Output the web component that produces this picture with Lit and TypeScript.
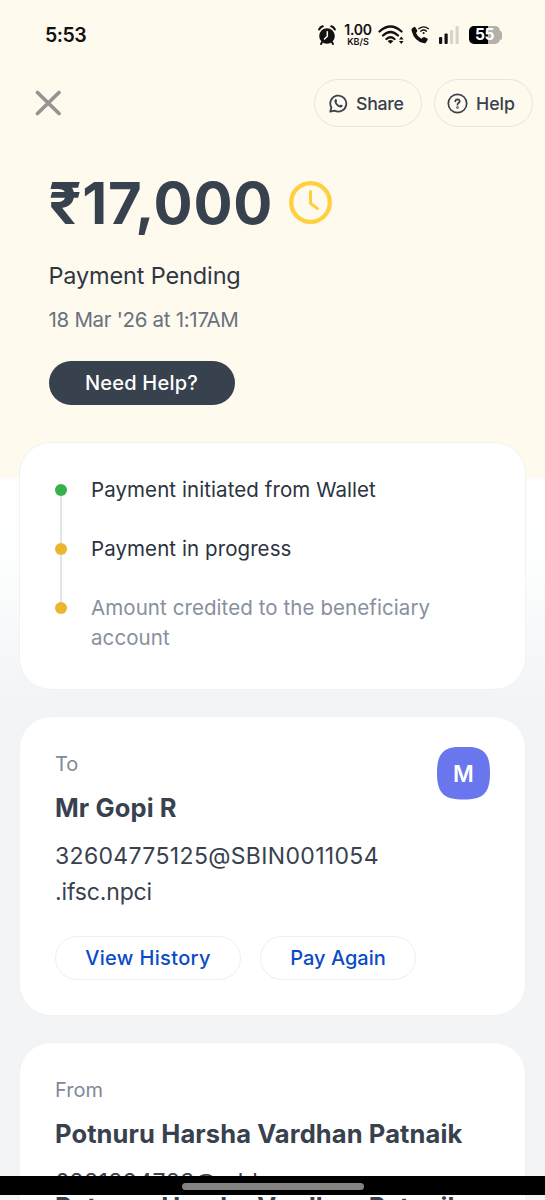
import { LitElement, html, css } from "lit";
import { customElement } from "lit/decorators.js";

interface Step {
  label: string;
  tone: "done" | "wait";
  muted?: boolean;
}

const STEPS: Step[] = [
  { label: "Payment initiated from Wallet", tone: "done" },
  { label: "Payment in progress", tone: "wait" },
  { label: "Amount credited to the beneficiary account", tone: "wait", muted: true },
];

@customElement("status-bar")
export class StatusBar extends LitElement {
  static styles = css`
    :host { display: flex; justify-content: space-between; height: 70px; padding: 0 43px 0 45px; align-items: center; color: #111; box-sizing: border-box; }
    .time { font-size: 19.5px; font-weight: 600; letter-spacing: -0.5px; line-height: 24px; }
    .icons { display: flex; align-items: center; height: 24px; margin-left: -2px; }
    .rate { display: flex; flex-direction: column; align-items: center; width: 28px; margin-left: 6px; font-weight: 600; }
    .num { font-size: 14px; line-height: 12px; letter-spacing: -0.3px; }
    .unit { font-size: 9px; line-height: 11px; }
    .wifi { margin-left: 6px; }
    .call { margin-left: 7px; }
    .signal { margin-left: 10px; }
    .battery { margin-left: 10px; display: flex; align-items: center; }
    .cell { width: 31px; height: 18px; border-radius: 5px; background: linear-gradient(90deg, #000 0 19px, #b4b1aa 19px); color: #fff; font-size: 15.5px; font-weight: 700; line-height: 18px; text-align: center; letter-spacing: -0.5px; }
    .cap { width: 2px; height: 9px; border-radius: 0 3px 3px 0; background: #b4b1aa; }
    svg { display: block; }
  `;
  render() {
    return html`
      <span class="time">5:53</span>
      <div class="icons">
        <svg width="20" height="22" viewBox="0 0 20 22">
          <circle cx="9" cy="12" r="7.800" fill="#111"/>
          <path d="M1.200 5.400Q2.300 3 4.700 2.300M16.800 5.400Q15.700 3 13.300 2.300" fill="none" stroke="#111" stroke-width="2.200" stroke-linecap="round"/>
          <path d="M4 18.300 3 20M14 18.300l1 1.700" stroke="#111" stroke-width="2" stroke-linecap="round"/>
          <path d="M9.300 7.800v4.400l-2.800 2.800" fill="none" stroke="#fffaee" stroke-width="1.500" stroke-linecap="round"/>
        </svg>
        <div class="rate"><span class="num">1.00</span><span class="unit">KB/S</span></div>
        <svg class="wifi" width="26" height="22" viewBox="0 0 26 22" fill="none" stroke="#111" stroke-width="2.300" stroke-linecap="round">
          <path d="M1.500 7.500Q12.500-2.500 23.500 7.500M5 11.500Q12.500 4.500 20 11.500M8.500 15Q12.500 11.500 16.500 15"/>
          <path d="M12.500 19.800 9.600 17q2.900-1.800 5.800 0z" fill="#111" stroke="none"/>
          <path d="M23.300 12.500l2.300 3h-4.600zM23.300 20l2.300-3h-4.600z" fill="#111" stroke="none"/>
        </svg>
        <svg class="call" width="18" height="20" viewBox="0 0 18 20">
          <path d="M1 3.600 3 1.900q.8-.5 1.300.3L6.200 5.200q.4.800-.2 1.500L5 7.900q1.700 4 5.400 5.800l1.800-1.400q.7-.5 1.500-.1l2.600 1.400q.8.500.3 1.300l-1.600 2.600q-.6.900-1.800.7Q3.500 17 .5 5.500.200 4.300 1 3.600z" fill="#111"/>
          <path d="M7.800 3.700q4.800-3.800 9.600 0M9.700 6.200q2.900-2.400 5.800 0" fill="none" stroke="#111" stroke-width="1.300" stroke-linecap="round"/>
          <circle cx="12.600" cy="8" r="1" fill="#111"/>
        </svg>
        <svg class="signal" width="20" height="20" viewBox="0 0 20 20">
          <rect x="0" y="12" width="3.200" height="7" rx="1" fill="#111"/>
          <rect x="5.500" y="8.500" width="3.200" height="10.500" rx="1" fill="#111"/>
          <rect x="11" y="5" width="3.200" height="14" rx="1" fill="#d8d4ca"/>
          <rect x="16.500" y="1" width="3.200" height="18" rx="1" fill="#d8d4ca"/>
        </svg>
        <div class="battery"><div class="cell">55</div><div class="cap"></div></div>
      </div>`;
  }
}

@customElement("top-actions")
export class TopActions extends LitElement {
  static styles = css`
    :host { display: flex; align-items: center; justify-content: space-between; padding: 9px 12px 0 35px; }
    .group { display: flex; gap: 12px; }
    .pill { display: flex; align-items: center; box-sizing: border-box; height: 48px; border: 1.500px solid #e9e5dc; border-radius: 24px; font: inherit; color: #38404d; background: none; font-size: 17.700px; font-weight: 500; margin: 0; }
    .share { width: 108px; padding: 0 0 0 14px; gap: 8px; letter-spacing: -0.250px; }
    .help { width: 99px; padding: 0 0 0 12px; gap: 8px; }
    svg { display: block; flex: none; }
  `;
  render() {
    return html`
      <svg width="26" height="26" viewBox="0 0 26 26"><path d="M2.500 2.500 24 23.500M24 2.500 2.500 23.500" stroke="#949494" stroke-width="3.700" stroke-linecap="round"/></svg>
      <div class="group">
        <button class="pill share">
          <svg width="19" height="19" viewBox="0 0 19 19" fill="none" stroke="#38404d" stroke-width="1.800" stroke-linejoin="round">
            <path d="M1.300 17.700 2.400 13.600A8 8 0 1 1 5.500 16.600z"/>
            <path d="M6.200 5.200 7.300 5.100 8.200 7.200 7.400 8.300Q8.500 10.500 10.700 11.400L11.700 10.500 13.700 11.500Q13.600 13.500 11.700 13.600 7 12.700 5.500 8 5.100 6 6.200 5.200z" fill="#38404d" stroke="none"/>
          </svg>
          <span>Share</span>
        </button>
        <button class="pill help">
          <svg width="21" height="21" viewBox="0 0 21 21" fill="none" stroke="#38404d" stroke-width="1.700" stroke-linecap="round">
            <circle cx="10.500" cy="10.500" r="9.200"/>
            <path d="M8.300 8.300Q8.500 6.300 10.500 6.300 12.700 6.400 12.700 8.300 12.600 9.400 11.400 10.100 10.500 10.600 10.500 11.700"/>
            <circle cx="10.500" cy="14.500" r=".4"/>
          </svg>
          <span>Help</span>
        </button>
      </div>`;
  }
}

@customElement("progress-steps")
export class ProgressSteps extends LitElement {
  static styles = css`
    :host { display: block; }
    .step { display: flex; gap: 24px; padding-bottom: 29px; }
    .step:last-child { padding-bottom: 0; }
    .rail { display: flex; flex-direction: column; align-items: center; width: 12px; margin-top: 9px; margin-bottom: -38px; }
    .step:last-child .rail { margin-bottom: 0; }
    .dot { width: 12px; height: 12px; border-radius: 50%; flex: none; }
    .done { background: #35b04a; }
    .wait { background: #ebb52f; }
    .line { width: 1.500px; flex: 1; background: #e3e4e9; }
    .label { flex: 1; font-size: 20.500px; line-height: 30px; color: #2b333f; letter-spacing: 0.080px; max-width: 370px; }
    .muted { color: #87909e; }
  `;
  render() {
    return STEPS.map((s, i) => html`
      <div class="step">
        <div class="rail"><div class="dot ${s.tone}"></div>${i < STEPS.length - 1 ? html`<div class="line"></div>` : null}</div>
        <div class="label ${s.muted ? "muted" : ""}">${s.label}</div>
      </div>`);
  }
}

@customElement("app-root")
export class AppRoot extends LitElement {
  static styles = css`
    :host { display: flex; flex-direction: column; height: 1200px; overflow: hidden; font-family: Inter, "Open Sans", sans-serif; color: #38414e; }
    .screen { height: 1176px; flex: none; overflow: hidden; background: linear-gradient(180deg, #fffaee 0 478px, #fefefe 478px, #fdfefe 560px, #f2f4f6 700px); }
    .hero { padding: 45px 49px 0 48.500px; }
    .amount { display: flex; align-items: center; gap: 15.500px; height: 62px; font-size: 58px; font-weight: 700; letter-spacing: 0.700px; line-height: 62px; }
    .amount svg { display: block; margin-top: -1px; }
    .state { margin-top: 27px; font-size: 23.500px; line-height: 30px; color: #2f3742; letter-spacing: -0.150px; }
    .date { margin-top: 15px; font-size: 20.500px; line-height: 28px; color: #68717e; letter-spacing: -0.300px; }
    .need { display: block; box-sizing: border-box; margin: 27px 0 0 0; border: 0; width: 186px; height: 44px; border-radius: 22px; background: #38414e; color: #fff; font: inherit; font-size: 20px; font-weight: 500; letter-spacing: 0.200px; padding: 0; }
    .cards { display: flex; flex-direction: column; gap: 26px; padding: 36.500px 19px 0; }
    .card { box-sizing: border-box; background: #fff; border: 1px solid #f0f2f4; border-radius: 32px; padding: 30.500px 35px 31px 35px; flex: none; }
    .steps { height: 248.500px; padding-top: 32px; }
    .to { height: 300px; display: flex; flex-direction: column; }
    .from { height: 300px; }
    .head { display: flex; justify-content: space-between; height: 43px; }
    .role { font-size: 20px; line-height: 32px; color: #808998; }
    .avatar { width: 53px; height: 53px; margin-top: -1px; clip-path: path("M26.500 0C46.500 0 53 6.500 53 26.500S46.500 53 26.500 53 0 46.500 0 26.500 6.500 0 26.500 0Z"); background: #6a76ed; color: #fff; font-size: 22.500px; font-weight: 600; line-height: 53px; text-align: center; }
    .name { font-size: 25.500px; font-weight: 700; line-height: 34px; white-space: nowrap; letter-spacing: 0.110px; }
    .account { margin-top: 13.500px; font-size: 23px; line-height: 36px; letter-spacing: 0.340px; }
    .tail { letter-spacing: -0.150px; }
    .buttons { display: flex; gap: 19px; margin-top: 26px; }
    .link { box-sizing: border-box; height: 44px; border: 1.500px solid #ecf0f4; border-radius: 22px; background: #fff; color: #0a4bc6; font: inherit; font-size: 20px; font-weight: 500; padding: 0; margin: 0; }
    .history { width: 186px; letter-spacing: 0.350px; }
    .again { width: 156px; }
    .nav { box-sizing: border-box; height: 19px; flex: none; background: #000; display: flex; justify-content: center; padding-top: 7px; }
    .handle { width: 182px; height: 7px; border-radius: 4px; background: #828282; }
    .strip { height: 5px; flex: none; overflow: hidden; background: #f2f4f6; padding: 0 19px; }
    .inner { background: #fff; height: 5px; padding: 0 35px; overflow: hidden; border: 0 solid #f0f2f4; border-width: 0 1px; }
    .inner .name { margin-top: -5px; }
  `;
  render() {
    return html`
      <div class="screen">
        <status-bar></status-bar>
        <top-actions></top-actions>
        <div class="hero">
          <div class="amount"><span>₹17,000</span>
            <svg width="43" height="43" viewBox="0 0 43 43" fill="none" stroke="#ffcf3d" stroke-linecap="round" stroke-linejoin="round">
              <circle cx="21.500" cy="21.500" r="19.300" stroke-width="4.200"/><path d="M21.500 10.500V22.500l7 5" stroke-width="3"/>
            </svg>
          </div>
          <div class="state">Payment Pending</div>
          <div class="date">18 Mar '26 at 1:17AM</div>
          <button class="need">Need Help?</button>
        </div>
        <div class="cards">
          <div class="card steps"><progress-steps></progress-steps></div>
          <div class="card to">
            <div class="head"><div class="role">To</div><div class="avatar">M</div></div>
            <div class="name">Mr Gopi R</div>
            <div class="account">32604775125@SBIN0011054<br><span class="tail">.ifsc.npci</span></div>
            <div class="buttons"><button class="link history">View History</button><button class="link again">Pay Again</button></div>
          </div>
          <div class="card from">
            <div class="head"><div class="role">From</div></div>
            <div class="name">Potnuru Harsha Vardhan Patnaik</div>
            <div class="account">6281894783@mbk</div>
          </div>
        </div>
      </div>
      <div class="nav"><div class="handle"></div></div>
      <div class="strip"><div class="inner"><div class="name">Potnuru Harsha Vardhan Patnaik</div></div></div>`;
  }
}
